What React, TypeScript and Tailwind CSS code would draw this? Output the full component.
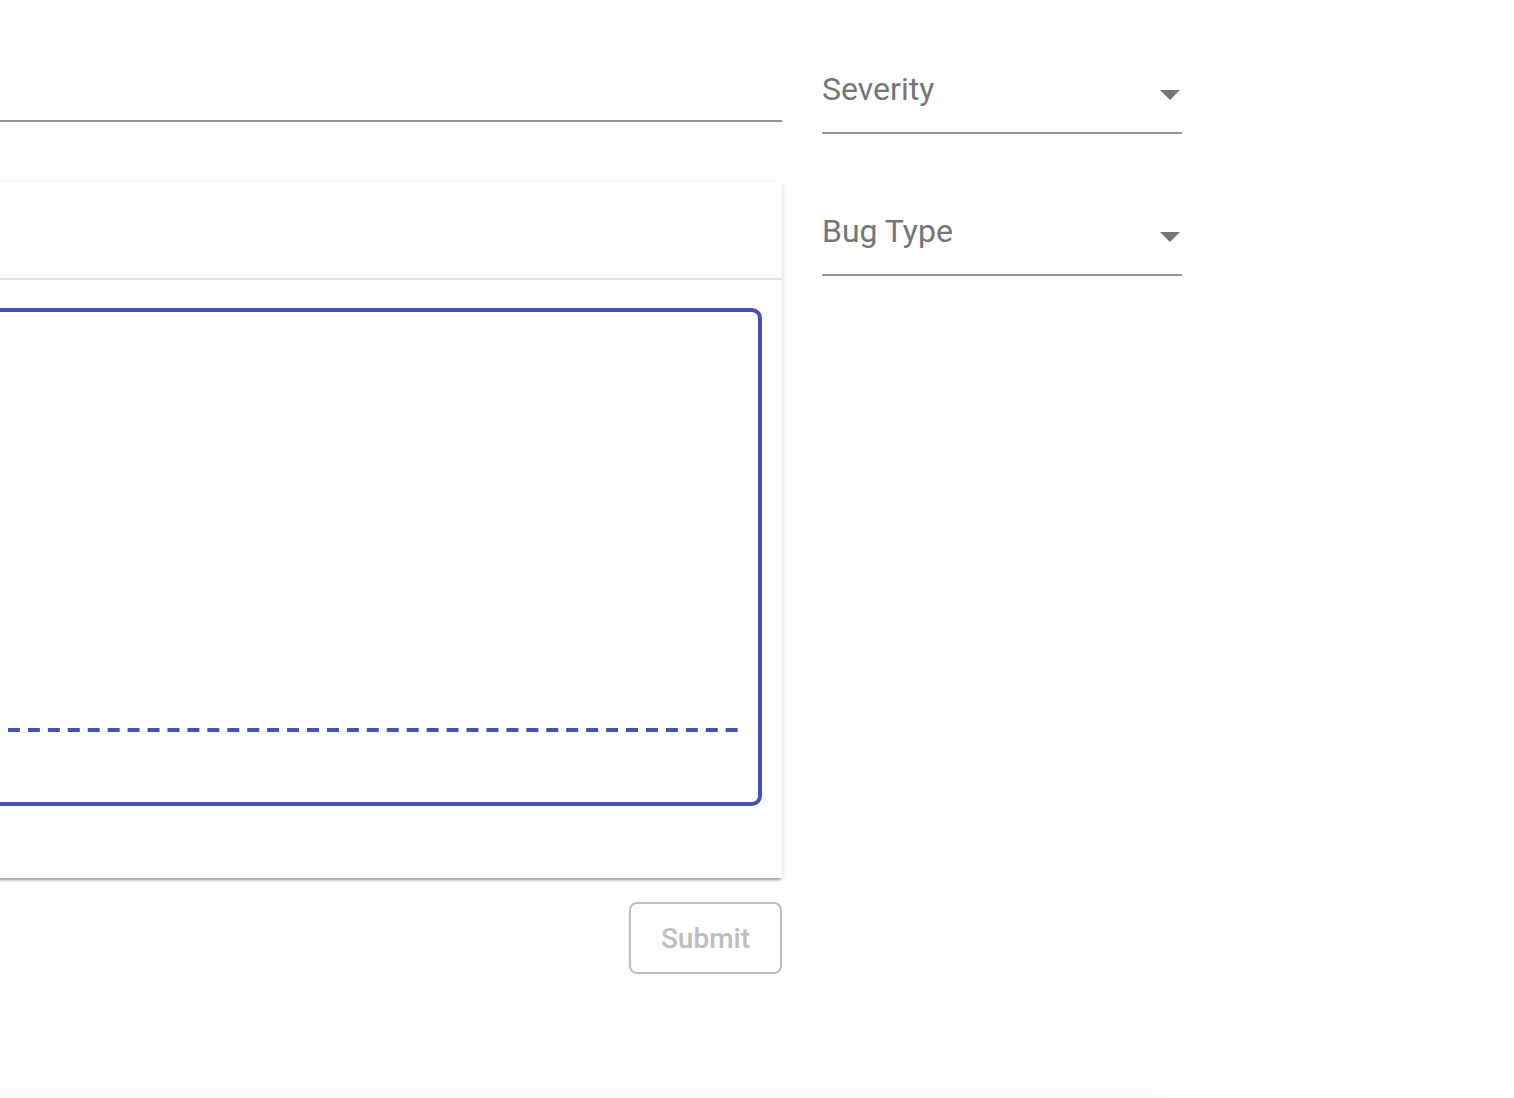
import { useState } from "react";

function SelectField({ label, options }: { label: string; options: string[] }) {
  const [value, setValue] = useState("");
  return (
    <div className="relative border-b-2 border-[#949494]">
      <select
        aria-label={label}
        value={value}
        onChange={(e) => setValue(e.target.value)}
        className="block h-22 w-full appearance-none bg-transparent pt-0.5 pr-10 text-[32px] leading-10 text-[#757575] outline-none"
      >
        <option value="" disabled hidden>
          {label}
        </option>
        {options.map((option) => (
          <option key={option}>{option}</option>
        ))}
      </select>
      <svg
        viewBox="0 0 20 10"
        className="pointer-events-none absolute right-0.5 bottom-8 h-2.5 w-5 fill-[#757575]"
        aria-hidden="true"
      >
        <path d="M0 0h20L10 10z" />
      </svg>
    </div>
  );
}

export default function App() {
  const [title, setTitle] = useState("");
  const [comment, setComment] = useState("");

  return (
    <div className="flex min-h-screen flex-col overflow-hidden bg-[#fefefe] font-['Roboto',sans-serif]">
      <main className="flex items-start gap-10 pr-[332px]">
        <form className="flex min-w-0 flex-1 flex-col" onSubmit={(e) => e.preventDefault()}>
          <input
            aria-label="Title"
            value={title}
            onChange={(e) => setTitle(e.target.value)}
            className="mt-10 h-[82px] w-full border-b-2 border-[#949494] bg-transparent text-[32px] outline-none"
          />
          <section className="mt-15 -ml-4 bg-[#fefefe] shadow-[0_4px_2px_-2px_rgba(0,0,0,0.2),0_2px_2px_0_rgba(0,0,0,0.14),0_2px_6px_0_rgba(0,0,0,0.12)]">
            <header className="h-[98px] border-b-2 border-[#e0e0e0]" />
            <div className="pt-7 pr-5 pb-18">
              <div className="rounded-r-[10px] border-4 border-l-0 border-[#4352b0]">
                <textarea
                  aria-label="Description"
                  value={comment}
                  onChange={(e) => setComment(e.target.value)}
                  className="block h-[416px] w-full resize-none bg-transparent p-5 text-[28px] outline-none"
                />
                <div className="mr-5 ml-4 h-1 bg-[linear-gradient(to_right,transparent_40%,#4352b0_40%)] bg-size-[20px_4px] bg-repeat-round" />
                <div className="h-[70px]" />
              </div>
            </div>
          </section>
          <button
            type="submit"
            disabled
            className="mt-6 h-18 self-end rounded-lg border-2 border-[#bdbdbd] px-[30px] pt-0.5 text-[28px] font-medium text-[#bdbdbd]"
          >
            Submit
          </button>
        </form>
        <aside className="flex w-[360px] flex-col gap-[52px] pt-11">
          <SelectField label="Severity" options={["Critical", "Major", "Minor"]} />
          <SelectField label="Bug Type" options={["Functional", "Visual", "Performance"]} />
        </aside>
      </main>
      <div className="mt-auto mr-[332px] -ml-10 shadow-[0_10px_50px_16px_rgba(0,0,0,0.02)]" />
    </div>
  );
}
